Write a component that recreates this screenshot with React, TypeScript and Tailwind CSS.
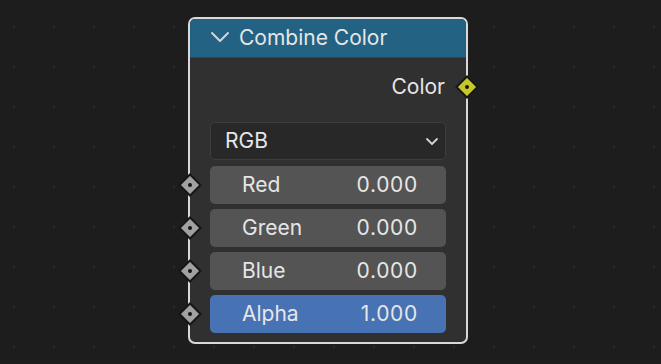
import React from "react";

function Socket({ color, className }: { color: string; className: string }) {
  return (
    <svg
      className={className}
      width="24"
      height="24"
      viewBox="0 0 24 24"
    >
      <polygon
        points="12,1.5 22.5,12 12,22.5 1.5,12"
        fill={color}
        stroke="#161616"
        strokeWidth="2"
        strokeLinejoin="miter"
      />
      <circle cx="12" cy="12" r="2" fill="#141414" />
    </svg>
  );
}

function Row({
  label,
  value,
  active,
}: {
  label: string;
  value: string;
  active?: boolean;
}) {
  return (
    <div className="relative h-[38px]">
      <Socket
        color="#a1a1a1"
        className="absolute left-[-32px] top-[7px]"
      />
      <div
        className={
          "flex h-full items-center justify-between rounded-[5px] pl-[32px] pr-[28px] text-[21px] text-[#e6e6e6] " +
          (active ? "bg-[#4772b3]" : "bg-[#545454]")
        }
      >
        <span>{label}</span>
        <span className="tracking-[0.7px]">{value}</span>
      </div>
    </div>
  );
}

export default function App() {
  return (
    <div
      className="h-[364px] w-[661px] overflow-hidden bg-[#1d1d1d] bg-[radial-gradient(circle,#2a2a2a_1px,transparent_1.6px)] bg-[size:40px_40px] bg-[position:-6px_7px] pl-[188px] pt-[17px]"
      style={{ fontFamily: "Inter, 'Noto Sans', sans-serif" }}
    >
      <div className="relative h-[327px] w-[280px] rounded-[7px] border-2 border-[#d9d9d9] bg-[#303030]">
        {/* header */}
        <div className="flex h-[39px] items-center rounded-t-[5px] border-b border-[#1f4a61] bg-[#246283] pl-[20px] text-[21px] text-[#e6e6e6]">
          <svg width="20" height="12" viewBox="0 0 20 12" className="mr-[9px] mt-[-3px]">
            <polyline
              points="2,2 10,10 18,2"
              fill="none"
              stroke="#d4d4d4"
              strokeWidth="2"
              strokeLinecap="round"
              strokeLinejoin="round"
            />
          </svg>
          <span>Combine Color</span>
        </div>

        {/* body */}
        <div className="px-[20px] pt-[14px]">
          <div className="relative flex h-[30px] items-center justify-end pr-[1px] text-[21px] text-[#e6e6e6]">
            <span>Color</span>
            <Socket
              color="#c7c729"
              className="absolute right-[-33px] top-[3px]"
            />
          </div>

          <div className="mt-[20px] flex h-[38px] items-center justify-between rounded-[5px] border border-[#3d3d3d] bg-[#282828] pl-[14px] pr-[6px] text-[21px] text-[#e6e6e6]">
            <span>RGB</span>
            <svg width="14" height="9" viewBox="0 0 14 9">
              <polyline
                points="2,2 7,7 12,2"
                fill="none"
                stroke="#d4d4d4"
                strokeWidth="1.8"
                strokeLinecap="round"
                strokeLinejoin="round"
              />
            </svg>
          </div>

          <div className="mt-[6px] flex flex-col gap-[5px]">
            <Row label="Red" value="0.000" />
            <Row label="Green" value="0.000" />
            <Row label="Blue" value="0.000" />
            <Row label="Alpha" value="1.000" active />
          </div>
        </div>
      </div>
    </div>
  );
}
